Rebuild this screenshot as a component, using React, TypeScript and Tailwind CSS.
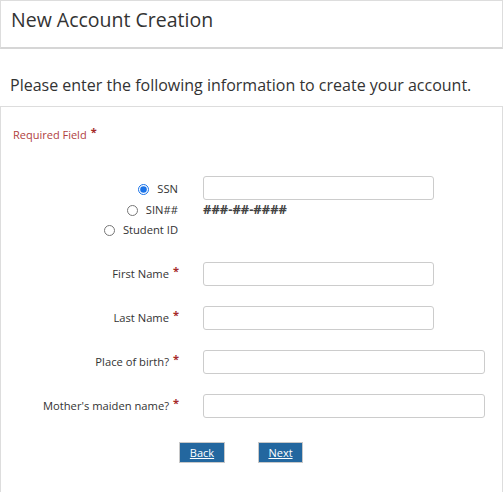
const Star = () => <span className="text-[#a52a2a] ml-[4px] text-[11px] font-bold relative top-[-3px]">*</span>;

const Field = ({ label, wide }: { label: string; wide?: boolean }) => (
  <div className="flex items-center h-[24px]">
    <div className="w-[180px] text-right pr-[2px] text-[11.2px] text-[#333]">
      {label}
      <Star />
    </div>
    <input
      className={`ml-[22px] h-[24px] rounded-[3px] border border-[#ccc] bg-white ${wide ? 'w-[282px]' : 'w-[231px]'}`}
    />
  </div>
);

export default function App() {
  return (
    <div className="w-[504px] h-[492px] bg-white overflow-hidden text-[#333]" style={{ fontFamily: '"Open Sans", sans-serif' }}>
      <div className="border border-[#ddd] border-b-2 border-b-[#d6d6d6] h-[49px] px-[10px] pt-[6px] mr-[1px]">
        <h1 className="text-[19.5px] leading-[26px] text-[#333]">New Account Creation</h1>
      </div>
      <p className="px-[10px] pt-[25px] pb-[10px] text-[16px] leading-[22px] text-[#333]">
        Please enter the following information to create your account.
      </p>
      <div className="border border-[#ddd] border-b-0 mr-[1px] h-[400px] pt-[20px]">
        <div className="px-[12px] text-[11px] text-[#b0413e]">
          Required Field
          <Star />
        </div>

        <div className="flex mt-[32px]">
          <div className="w-[177px] flex flex-col items-end text-[11.2px] text-[#333] pt-[4px]">
            <label className="flex items-center gap-[8px] h-[20.5px]">
              <input type="radio" name="id" defaultChecked className="w-[11px] h-[11px] accent-[#1a73e8]" />
              SSN
            </label>
            <label className="flex items-center gap-[8px] h-[20.5px]">
              <input type="radio" name="id" className="w-[11px] h-[11px]" />
              SIN##
            </label>
            <label className="flex items-center gap-[8px] h-[20.5px]">
              <input type="radio" name="id" className="w-[11px] h-[11px]" />
              Student ID
            </label>
          </div>
          <div className="ml-[25px]">
            <input className="w-[231px] h-[24px] rounded-[3px] border border-[#ccc] bg-white" />
            <div className="text-[13px] font-bold text-[#444] leading-[18px]">###-##-####</div>
          </div>
        </div>

        <div className="flex flex-col gap-[20px] mt-[21px]">
          <Field label="First Name" />
          <Field label="Last Name" />
          <Field label="Place of birth?" wide />
          <Field label="Mother's maiden name?" wide />
        </div>

        <div className="flex mt-[24px] pl-[178px] gap-[33px]">
          <button className="w-[46px] h-[21px] bg-[#23679f] border border-[#c8c8c8] text-white text-[11px] underline leading-none">
            Back
          </button>
          <button className="w-[45px] h-[21px] bg-[#23679f] border border-[#c8c8c8] text-white text-[11px] underline leading-none">
            Next
          </button>
        </div>
      </div>
    </div>
  );
}
